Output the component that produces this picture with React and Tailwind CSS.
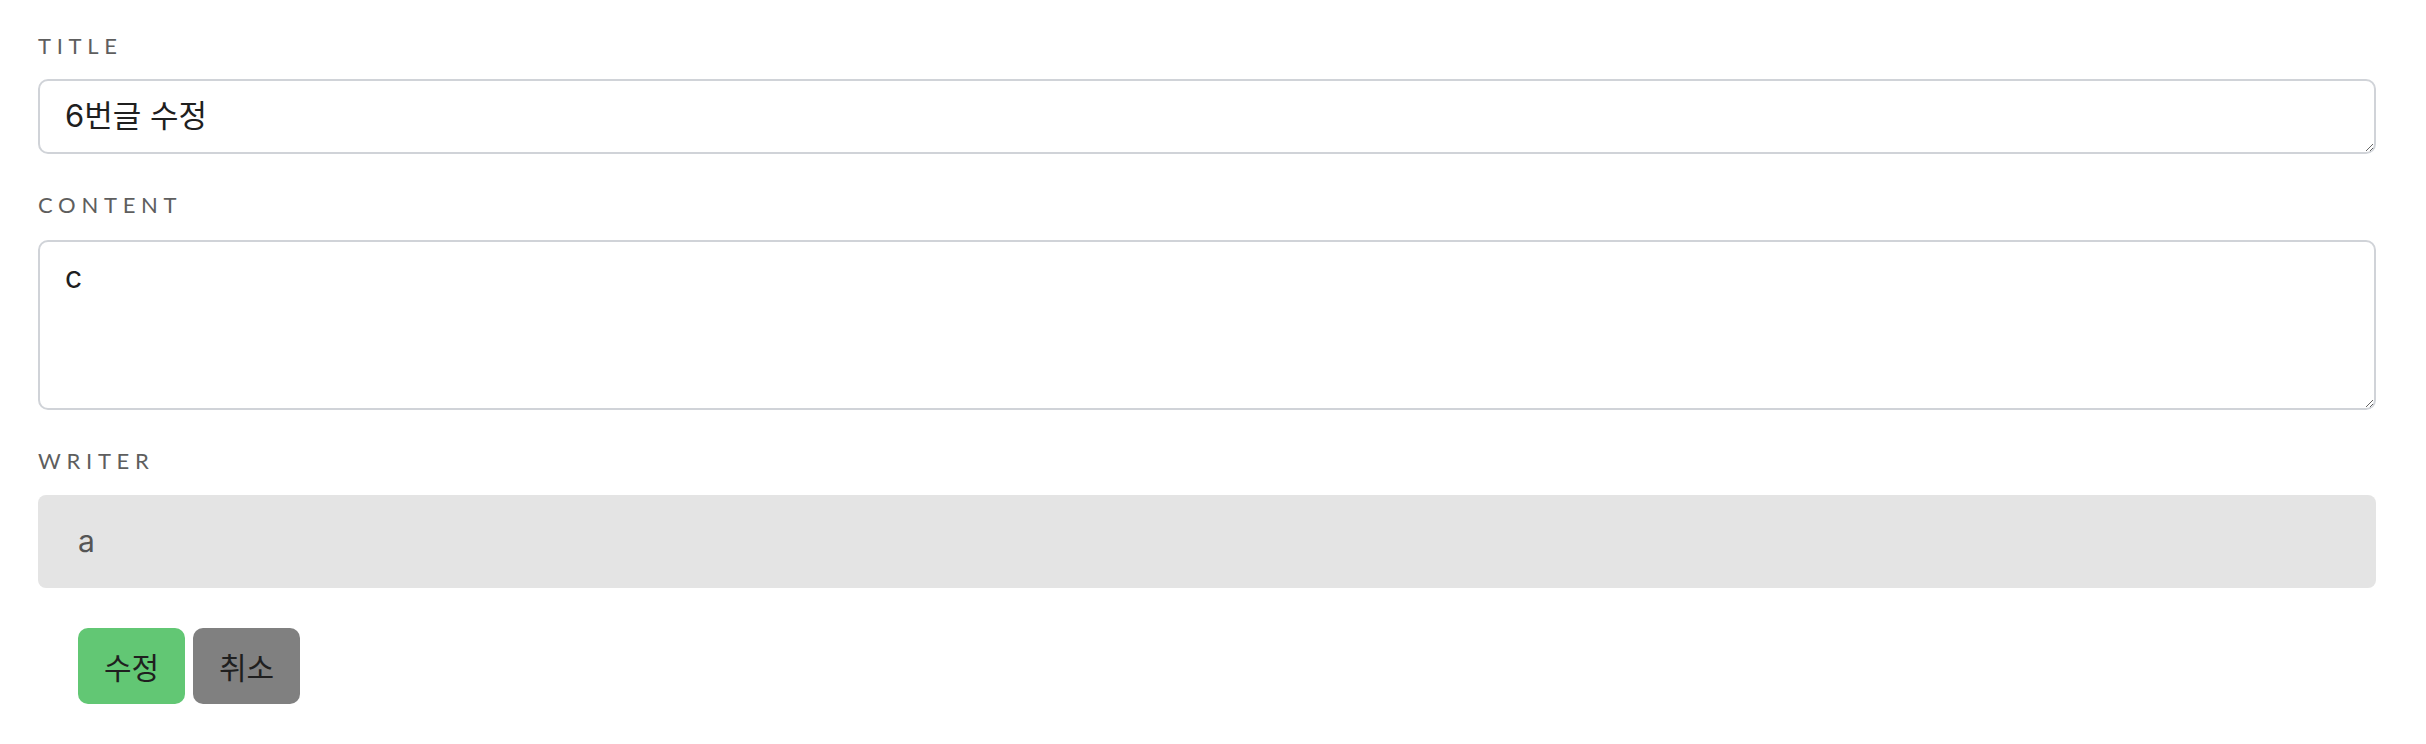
import { useState } from 'react'

// ── Field label ─────────────────────────────────────────────────────────────
function FieldLabel({ children }) {
  return (
    <label className="block font-['Lato',sans-serif] text-[22px] leading-[32px] tracking-[0.26em] uppercase text-[#5e5e5e]">
      {children}
    </label>
  )
}

// ── Page ────────────────────────────────────────────────────────────────────
export default function App() {
  const [title,   setTitle]   = useState('6번글 수정')
  const [content, setContent] = useState('c')

  return (
    <main className="min-h-screen bg-white pl-[38px] pr-[50px] pt-[30px] font-['Inter','Noto_Sans_CJK_KR',sans-serif]">
      {/* Title */}
      <FieldLabel>Title</FieldLabel>
      <textarea
        value={title}
        onChange={e => setTitle(e.target.value)}
        className="mt-[17px] block w-full h-[75px] rounded-[10px] border-2 border-[#d0d3d8] bg-white px-[25px] py-[12px] text-[31px] leading-[45px] text-[#1f1f1f] outline-none font-['Inter','Noto_Sans_CJK_KR',sans-serif]"
      />

      {/* Content */}
      <div className="mt-[35px]">
        <FieldLabel>Content</FieldLabel>
      </div>
      <textarea
        value={content}
        onChange={e => setContent(e.target.value)}
        className="mt-[19px] block w-full h-[170px] rounded-[10px] border-2 border-[#d0d3d8] bg-white px-[25px] py-[13px] text-[30px] leading-[45px] text-[#1f1f1f] outline-none font-['Inter','Noto_Sans_CJK_KR',sans-serif]"
      />

      {/* Writer (read only) */}
      <div className="mt-[35px]">
        <FieldLabel>Writer</FieldLabel>
      </div>
      <div className="mt-[18px] h-[93px] rounded-[8px] bg-[#e4e4e4] px-[40px] flex items-center text-[30px] text-[#555555] font-['Inter',sans-serif]">
        a
      </div>

      {/* Actions */}
      <div className="mt-[40px] ml-[40px] flex gap-[8px]">
        <button className="w-[107px] h-[76px] rounded-[10px] bg-[#62c774] text-[30px] text-[#1f1f1f] font-['Noto_Sans_CJK_KR',sans-serif]">
          수정
        </button>
        <button className="w-[107px] h-[76px] rounded-[10px] bg-[#808080] text-[30px] text-[#1f1f1f] font-['Noto_Sans_CJK_KR',sans-serif]">
          취소
        </button>
      </div>
    </main>
  )
}
